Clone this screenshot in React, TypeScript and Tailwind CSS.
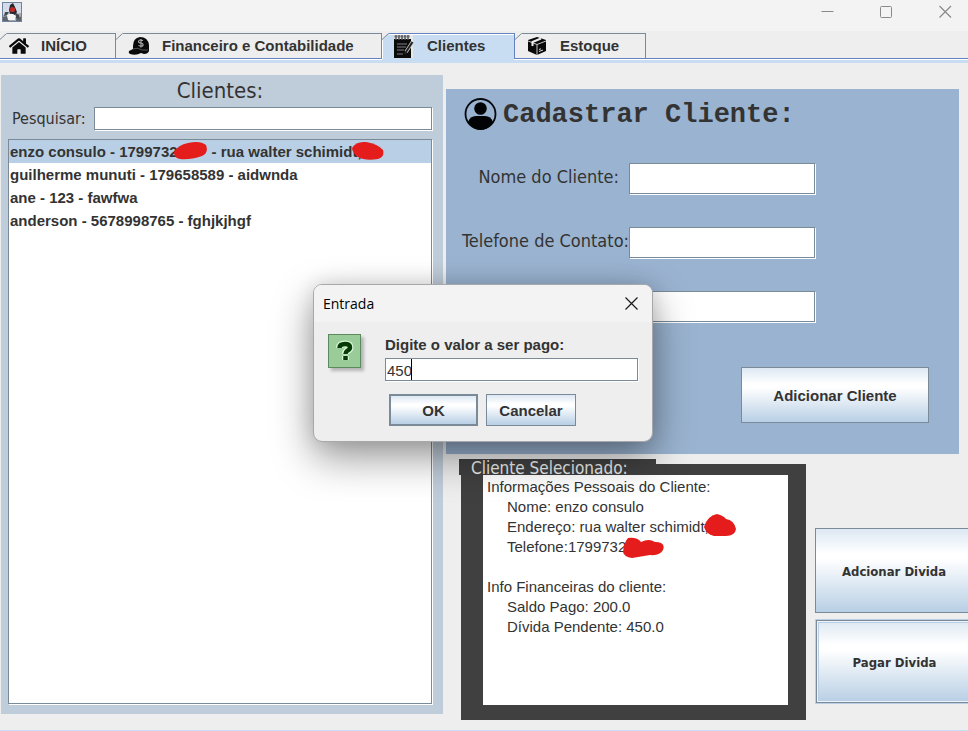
import React, { useState } from "react";
import { FaHome } from "react-icons/fa";

const SANS = "font-['Liberation_Sans',Arial,sans-serif]";
const TAHOMA = "font-['DejaVu_Sans_Condensed','DejaVu_Sans',Tahoma,sans-serif]";
const METAL = "bg-[linear-gradient(#dde8f3_0%,#ffffff_30%,#ffffff_36%,#b8cfe5_100%)]";
const FIELD = "border border-[#7a8a99] bg-white shadow-[1px_1px_0_#ffffff] outline-none";

function JavaIcon() {
  return (
    <svg width="20" height="20" viewBox="0 0 20 20" aria-hidden="true">
      <rect x="0.5" y="0.5" width="19" height="19" fill="#d3dce8" stroke="#71839c" />
      <path d="M1 13 L8 11 L13 12 L19 11 V19 H1Z" fill="#a2a6ab" />
      <path d="M1 15 L5 14 L7 19 H1Z M15 14 L19 15 V19 H14Z" fill="#5f656d" />
      <path d="M8 3 L11 1 L13 5 L15 10 L13 13 L8 12 L7 8Z" fill="#25282c" />
      <circle cx="10.500" cy="7.500" r="2.600" fill="#c32828" />
      <path d="M3 10 L7 10 L5 13 L2 14Z M14 11 L17 13 L17 17 L13 16Z" fill="#454a51" />
      <path d="M5 13 Q10 10 14 14 L13 18 H6Z" fill="#f3f4f5" />
    </svg>
  );
}

function CapIcon() {
  return (
    <svg width="22" height="19" viewBox="0 0 22 19" aria-hidden="true">
      <path d="M5 9 Q5 1 12 0 Q20 0 21 8 L21 14 Q20 17 16 17 L13 16 Q8 19 2 17 Q0 16 1 14 L5 12Z" fill="#0a0a0a" />
      <path d="M5 12 Q10 10 14 13 L20 13" fill="none" stroke="#555555" />
      <path d="M15 3.500 Q11 2 10.500 4.500 Q10.500 6 13 6 Q15.500 6.500 15 8.500 Q13.500 10 10.500 8.500 M13 2 V10.500" fill="none" stroke="#b0b0b0" strokeWidth="1.100" />
    </svg>
  );
}

function NotepadIcon() {
  return (
    <svg width="20" height="24" viewBox="0 0 20 24" aria-hidden="true">
      <rect x="0" y="0" width="19" height="23" fill="#e8e8e6" />
      <rect x="0" y="4" width="17" height="19" fill="#0b0b0b" />
      <path d="M0 1.500H16" stroke="#9a9da0" strokeWidth="2" />
      <path d="M2 0V5M5 0V5M8 0V5M11 0V5M14 0V5" stroke="#55585c" strokeWidth="1.500" />
      <path d="M3 9H13M3 12H12M3 15H10M3 19H9" stroke="#7c8186" />
      <path d="M18.500 7 L12 17" stroke="#c8c8c8" strokeWidth="3.500" />
      <path d="M18.500 7 L12 17 L10.500 19" stroke="#222" strokeWidth="2" />
    </svg>
  );
}

function BoxIcon() {
  return (
    <svg width="20" height="20" viewBox="0 0 20 20" aria-hidden="true">
      <path d="M10 1 L19 4 V15 L10 19 L1 15 V4Z" fill="#080808" />
      <path d="M1 5 L10 8.500 L19 5 M10 8.500 V19" fill="none" stroke="#c4c4c4" />
      <path d="M14 2.500 L5.500 6 V10" fill="none" stroke="#ececec" strokeWidth="2" />
      <path d="M12 15.500 L16 14 M12 13.500 L14 12.800" stroke="#ddd" />
    </svg>
  );
}

function PersonIcon() {
  return (
    <svg width="33" height="33" viewBox="0 0 33 33" aria-hidden="true">
      <circle cx="16.500" cy="16" r="15" fill="none" stroke="#05080c" strokeWidth="1.800" />
      <circle cx="16.500" cy="10.500" r="6.300" fill="#020304" />
      <path d="M4 24 Q6 18 12 18 H21 Q27 18 29 24 Q24 32 16.500 32 Q9 32 4 24Z" fill="#020304" />
    </svg>
  );
}

function QuestionIcon() {
  return (
    <span className="flex h-[34px] w-[33px] shrink-0 items-center justify-center border border-[#5c8a5e] bg-[#99cc99] shadow-[3px_3px_3px_#b5b5b5]">
      <svg width="18" height="22" viewBox="0 0 18 22" aria-hidden="true">
        <path d="M3.500 8 Q3.500 4 9 4 Q14 4 14 7.500 Q14 9.500 11 11 Q9.500 12 9.500 14 M9.500 16 V20" fill="none" stroke="#d9f5d9" strokeWidth="7" />
        <path d="M3.500 8 Q3.500 4 9 4 Q14 4 14 7.500 Q14 9.500 11 11 Q9.500 12 9.500 14 M9.500 16 V20" fill="none" stroke="#063b06" strokeWidth="4.500" />
        <path d="M7 15 H12" stroke="#d9f5d9" />
      </svg>
    </span>
  );
}

function Scribble({ d, width, height, className }: { d: string; width: number; height: number; className: string }) {
  return (
    <svg width={width} height={height} viewBox={`0 0 ${width} ${height}`} aria-hidden="true" className={`absolute max-w-none ${className}`}>
      <path d={d} fill="#e51c1c" />
    </svg>
  );
}

function TabCorner({ fill }: { fill: string }) {
  return (
    <svg width="7" height="7" viewBox="0 0 7 7" aria-hidden="true" className="absolute -top-px left-0">
      <path d="M0 0H7L0 7Z" fill="#eeeeee" />
      <path d="M0 7L7 0V7Z" fill={fill} />
      <path d="M0 6.500L6.500 0.500" stroke="#7a8a99" />
    </svg>
  );
}

type TabProps = { icon: React.ReactNode; label: string; selected?: boolean; className: string };

function Tab({ icon, label, selected = false, className }: TabProps) {
  return (
    <button
      type="button"
      role="tab"
      aria-selected={selected}
      className={`relative flex h-[26px] items-center border-t border-r text-left whitespace-nowrap ${
        selected
          ? "border-[#6382bf] bg-[#c8ddf2] shadow-[inset_1px_1px_0_#ffffff] after:absolute after:inset-x-0 after:top-full after:h-[3px] after:bg-[#c8ddf2]"
          : "border-b border-[#7a8a99] border-b-[#6382bf]"
      } ${className}`}
    >
      <TabCorner fill={selected ? "#c8ddf2" : "#eeeeee"} />
      <span className="relative flex w-[22px] shrink-0 justify-center">{icon}</span>
      <span>{label}</span>
    </button>
  );
}

const fields = [
  { id: "nome", label: "Nome do Cliente:", pad: "pr-[10px]" },
  { id: "telefone", label: "Telefone de Contato:", pad: "" },
  { id: "endereco", label: "Endereço:", pad: "pr-[10px]" },
];

function ClientList() {
  return (
    <section className="flex flex-col bg-[#bfccd9] pt-[2px] pr-[11px] pb-[10px] pl-[7px]">
      <h1 className={`${TAHOMA} text-center text-[22px] leading-[28px]`}>Clientes:</h1>
      <div className="mt-[2px] flex items-center">
        <label htmlFor="pesquisar" className={`${TAHOMA} w-[86px] pl-[4px] text-[16px] leading-[22px] font-extralight`}>
          Pesquisar:
        </label>
        <input id="pesquisar" className={`${FIELD} h-[23px] min-w-0 flex-1 px-1`} />
      </div>
      <ul
        role="listbox"
        aria-label="Clientes"
        className={`${SANS} mt-[9px] flex-1 border border-[#7a8a99] bg-white text-[15px] leading-[23px] font-bold whitespace-nowrap shadow-[1px_1px_0_#ffffff]`}
      >
        <li role="option" aria-selected="true" className="flex bg-[#b8cfe5] pl-px">
          <span>enzo consulo - 1799732</span>
          <span className="relative w-[30px]">
            <Scribble width={34} height={19} className="top-px -left-[4px]" d="M0 11 Q4 4 14 2 Q26 -1 32 4 Q35 12 28 15 Q16 19 6 18 Q0 17 0 11Z" />
          </span>
          <span className="pl-1">- rua walter schimidt,</span>
          <span className="relative">
            <Scribble width={32} height={20} className="top-px -left-[10px]" d="M0 7 Q4 0 14 1 Q26 3 31 9 Q33 16 26 18 Q13 20 6 16 Q1 13 0 7Z" />
          </span>
        </li>
        <li role="option" aria-selected="false" className="pl-px">guilherme munuti - 179658589 - aidwnda</li>
        <li role="option" aria-selected="false" className="pl-px">ane - 123 - fawfwa</li>
        <li role="option" aria-selected="false" className="pl-px">anderson - 5678998765 - fghjkjhgf</li>
      </ul>
    </section>
  );
}

function ClientForm() {
  return (
    <form className="mt-[14px] mr-[9px] flex h-[365px] flex-col bg-[#9ab3d0]" onSubmit={(e) => e.preventDefault()}>
      <h2 className="flex items-center gap-[6px] pt-[8px] pl-[18px] font-['Liberation_Mono','Courier_New',monospace] text-[27px] leading-[33px] font-bold whitespace-pre">
        <PersonIcon />
        <span className="pt-[2px]">Cadastrar Cliente:</span>
      </h2>
      <div className="mt-[31px] flex flex-col gap-[33px]">
        {fields.map((f) => (
          <div key={f.id} className="flex items-center">
            <label htmlFor={f.id} className={`${TAHOMA} w-[183px] pb-[3px] text-right text-[18px] leading-[24px] whitespace-nowrap ${f.pad}`}>
              {f.label}
            </label>
            <input id={f.id} className={`${FIELD} h-[31px] w-[186px] px-1`} />
          </div>
        ))}
      </div>
      <button
        type="submit"
        className={`${SANS} ${METAL} mt-auto mr-[30px] mb-[31px] h-[56px] w-[188px] self-end border border-[#7a8a99] pt-[2px] text-[15px] font-bold`}
      >
        Adicionar Cliente
      </button>
    </form>
  );
}

function SelectedClient() {
  return (
    <section className="ml-[15px] h-[256px] w-[345px] shrink-0 bg-[#404040] pr-[18px] pb-[15px]">
      <h2 className={`${TAHOMA} -mt-[5px] -ml-[2px] h-[16px] w-[197px] bg-[#404040] pl-[12px] text-[17px] leading-[18px] whitespace-nowrap text-[#eeeeee]`}>
        Cliente Selecionado:
      </h2>
      <div className={`${SANS} ml-[22px] h-[230px] bg-white pt-[2px] pl-[4px] text-[15px] leading-[20px] whitespace-nowrap`}>
        <p>Informações Pessoais do Cliente:</p>
        <p className="pl-[20px]">Nome: enzo consulo</p>
        <p className="flex pl-[20px]">
          Endereço: rua walter schimidt,
          <span className="relative">
            <Scribble width={33} height={22} className="-top-[3px] -left-[5px]" d="M0 13 Q3 2 13 0 Q20 2 22 5 Q30 6 32 15 Q31 22 22 22 H10 Q2 20 0 13Z" />
          </span>
        </p>
        <p className="flex pl-[20px]">
          Telefone:1799732
          <span className="relative">
            <Scribble width={41} height={21} className="top-0 -left-[3px]" d="M0 15 Q1 5 5 1 Q14 0 18 5 Q26 1 32 5 Q43 5 40 13 Q37 19 27 18 L9 21 Q1 20 0 15Z" />
          </span>
        </p>
        <p className="mt-[20px]">Info Financeiras do cliente:</p>
        <p className="pl-[20px]">Saldo Pago: 200.0</p>
        <p className="pl-[20px]">Dívida Pendente: 450.0</p>
      </div>
    </section>
  );
}

function PaymentDialog() {
  const [value, setValue] = useState("450");
  return (
    <div
      role="dialog"
      aria-label="Entrada"
      className="absolute top-[284px] left-[313px] w-[340px] rounded-[9px] border border-[#a6a8ab] bg-[#eeeeee] pb-[15px] shadow-[0_16px_40px_rgba(0,0,0,0.4),0_0_20px_rgba(0,0,0,0.12)]"
    >
      <div className="flex h-[37px] items-center justify-between rounded-t-[8px] bg-[#f3f3f3] pr-[14px] pl-[9px]">
        <span className="font-['Open_Sans','Noto_Sans',sans-serif] text-[14px] text-black">Entrada</span>
        <button type="button" aria-label="Fechar">
          <svg width="13" height="13" viewBox="0 0 13 13" aria-hidden="true">
            <path d="M0.500 0.500L12.500 12.500M12.500 0.500L0.500 12.500" stroke="#1a1a1a" strokeWidth="1.200" />
          </svg>
        </button>
      </div>
      <div className="flex gap-[24px] px-[14px] pt-[12px]">
        <QuestionIcon />
        <div className={`${SANS} flex flex-1 flex-col`}>
          <label htmlFor="valor" className="text-[15px] leading-[22px] font-bold">
            Digite o valor a ser pago:
          </label>
          <div className={`${FIELD} mt-[2px] flex h-[23px] items-center`}>
            <input
              id="valor"
              value={value}
              onChange={(e) => setValue(e.target.value)}
              className="mt-[3px] w-[25px] bg-transparent pl-px text-[15px] leading-[20px] outline-none [field-sizing:content]"
            />
            <span className="h-full w-px bg-black" />
          </div>
        </div>
      </div>
      <div className={`${SANS} mt-[13px] flex gap-[8px] pl-[75px] text-[15px] font-bold`}>
        <button type="button" className={`${METAL} h-[32px] w-[89px] border-2 border-[#7a8a99] pt-[3px]`}>OK</button>
        <button type="button" className={`${METAL} h-[32px] w-[90px] border border-[#7a8a99] pt-[3px]`}>Cancelar</button>
      </div>
    </div>
  );
}

export default function App() {
  return (
    <div className="relative flex min-h-screen flex-col overflow-hidden bg-[#eeeeee] text-[#333333]">
      <header className="flex h-[31px] items-start justify-between bg-[#f3f3f3] pt-[2px] pr-[16px] pl-[2px]">
        <JavaIcon />
        <div className="flex gap-[46px] pt-[3px]">
          <button type="button" aria-label="Minimizar">
            <svg width="13" height="13" viewBox="0 0 13 13" aria-hidden="true"><path d="M0.500 6.500H12.500" stroke="#8a8a8a" /></svg>
          </button>
          <button type="button" aria-label="Maximizar">
            <svg width="13" height="13" viewBox="0 0 13 13" aria-hidden="true"><rect x="0.500" y="1.500" width="11" height="11" rx="1" fill="none" stroke="#8a8a8a" /></svg>
          </button>
          <button type="button" aria-label="Fechar janela">
            <svg width="13" height="13" viewBox="0 0 13 13" aria-hidden="true"><path d="M0.500 1L12 12.500M12 1L0.500 12.500" stroke="#8a8a8a" strokeWidth="1.200" /></svg>
          </button>
        </div>
      </header>

      <nav role="tablist" className={`${SANS} flex h-[32px] items-start bg-[linear-gradient(#eeeeee_27px,#6382bf_27px,#6382bf_28px,#ffffff_28px,#ffffff_29px,#c8ddf2_29px)] pt-[2px] text-[15px] font-bold`}>
        <Tab className="w-[116px] gap-[11px] pl-[8px]" icon={<FaHome size={20} color="#0a0a0a" />} label="INÍCIO" />
        <Tab className="w-[266px] gap-[12px] pl-[12px]" icon={<CapIcon />} label="Financeiro e Contabilidade" />
        <Tab selected className="w-[133px] gap-[12px] pl-[11px]" icon={<NotepadIcon />} label="Clientes" />
        <Tab className="w-[131px] gap-[12px] pl-[11px]" icon={<BoxIcon />} label="Estoque" />
      </nav>

      <main className="grid flex-1 grid-cols-[442fr_522fr] gap-[3px] border-b border-[#c8ddf2] pt-[12px] pb-[16px] pl-px">
        <ClientList />
        <div className="flex min-w-0 flex-col">
          <ClientForm />
          <div className="-mb-[6px] flex gap-[9px] pt-[10px]">
            <SelectedClient />
            <div className={`${TAHOMA} -mr-[5px] flex flex-1 flex-col gap-[7px] pt-[64px] text-[13px] font-bold`}>
              <button type="button" className={`${METAL} h-[85px] border border-[#7a8a99] pt-[2px]`}>Adcionar Divida</button>
              <button
                type="button"
                className={`${METAL} ml-px h-[83px] border border-[#7a8a99] pt-[2px] shadow-[0_0_0_1px_#b8cfe5,inset_0_0_0_1px_#eef4fa,inset_0_0_0_2px_#b8cfe5]`}
              >
                Pagar Divida
              </button>
            </div>
          </div>
        </div>
      </main>

      <PaymentDialog />
    </div>
  );
}
